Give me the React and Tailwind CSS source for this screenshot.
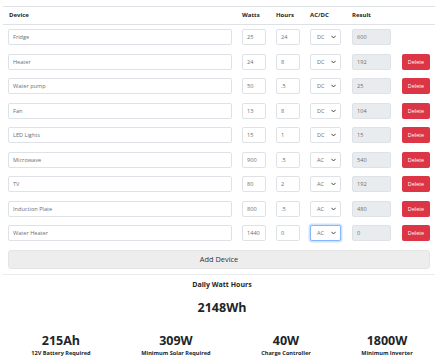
import React from 'react'

const rows = [
  { name: 'Fridge', watts: '25', hours: '24', type: 'DC', result: '600', del: false },
  { name: 'Heater', watts: '24', hours: '8', type: 'DC', result: '192', del: true },
  { name: 'Water pump', watts: '50', hours: '.5', type: 'DC', result: '25', del: true },
  { name: 'Fan', watts: '13', hours: '8', type: 'DC', result: '104', del: true },
  { name: 'LED Lights', watts: '15', hours: '1', type: 'DC', result: '15', del: true },
  { name: 'Microwave', watts: '900', hours: '.5', type: 'AC', result: '540', del: true },
  { name: 'TV', watts: '80', hours: '2', type: 'AC', result: '192', del: true },
  { name: 'Induction Plate', watts: '800', hours: '.5', type: 'AC', result: '480', del: true },
  { name: 'Water Heater', watts: '1440', hours: '0', type: 'AC', result: '0', del: true, focus: true },
]

const stats = [
  { value: '215Ah', label: '12V Battery Required' },
  { value: '309W', label: 'Minimum Solar Required' },
  { value: '40W', label: 'Charge Controller' },
  { value: '1800W', label: 'Minimum Inverter' },
]

const cols = 'grid grid-cols-[234px_34px_34px_42px_50px_38px]'
const field = 'h-[16px] rounded-[2px] border border-[#dee2e6] px-[4px] text-[5.6px] text-[#6c6f73] flex items-center'

function Row({ r }) {
  return (
    <div className={`${cols} h-[24.5px] items-center`}>
      <div className="px-[5px]">
        <div className={`${field} w-[224px] bg-white`}>{r.name}</div>
      </div>
      <div className="px-[5px]">
        <div className={`${field} w-[24px] bg-white`}>{r.watts}</div>
      </div>
      <div className="px-[5px]">
        <div className={`${field} w-[24px] bg-white`}>{r.hours}</div>
      </div>
      <div className="px-[5px]">
        <div
          className={`h-[16px] w-[31px] rounded-[2px] border bg-white pl-[6px] pr-[4px] text-[5.6px] text-[#6c6f73] flex items-center justify-between ${
            r.focus ? 'border-[#86b7fe] shadow-[0_0_0_1.5px_rgba(13,110,253,0.2)]' : 'border-[#dee2e6]'
          }`}
        >
          <span>{r.type}</span>
          <svg width="5" height="4" viewBox="0 0 16 12">
            <path d="m2 3 6 6 6-6" fill="none" stroke="#343a40" strokeWidth="3" strokeLinecap="round" strokeLinejoin="round" />
          </svg>
        </div>
      </div>
      <div className="px-[5px]">
        <div className={`${field} w-[39px] bg-[#e9ecef]`}>{r.result}</div>
      </div>
      <div className="px-[5px]">
        {r.del && (
          <div className="h-[16px] w-[28px] rounded-[2px] bg-[#dc3545] text-white text-[5.4px] flex items-center justify-center">
            Delete
          </div>
        )}
      </div>
    </div>
  )
}

export default function App() {
  return (
    <div className="w-[444px] h-[364px] bg-white overflow-hidden pt-[6px]" style={{ fontFamily: '"Open Sans", "Noto Sans", sans-serif' }}>
      <div className="ml-[3px] w-[432px]">
        <div className={`${cols} h-[19px] items-center border-y border-[#dee2e6] text-[6px] font-bold text-[#212529]`}>
          <div className="px-[6px]">Device</div>
          <div className="px-[5px]">Watts</div>
          <div className="px-[5px]">Hours</div>
          <div className="px-[5px]">AC/DC</div>
          <div className="px-[5px]">Result</div>
          <div />
        </div>
        {rows.map((r) => (
          <Row key={r.name} r={r} />
        ))}
        <div className="px-[5px] mt-[4.5px]">
          <div className="h-[19px] rounded-[3px] border border-[#e4e4e4] bg-[#ededed] flex items-center justify-center text-[7.4px] text-[#333]">
            Add Device
          </div>
        </div>
        <div className="mt-[5px] border-t border-[#e9ecef]" />
      </div>
      <div className="text-center text-[#212529]">
        <div className="mt-[5px] text-[7px] leading-[10px] font-bold">Daily Watt Hours</div>
        <div className="mt-[10px] text-[12.5px] leading-[16px] font-bold">2148Wh</div>
      </div>
      <div className="mt-[17px] flex justify-around px-[6px] text-[#212529]">
        {stats.map((s) => (
          <div key={s.label} className="flex flex-col items-center">
            <div className="text-[12.5px] leading-[16px] font-bold">{s.value}</div>
            <div className="text-[5.6px] leading-[8px] font-bold">{s.label}</div>
          </div>
        ))}
      </div>
    </div>
  )
}
